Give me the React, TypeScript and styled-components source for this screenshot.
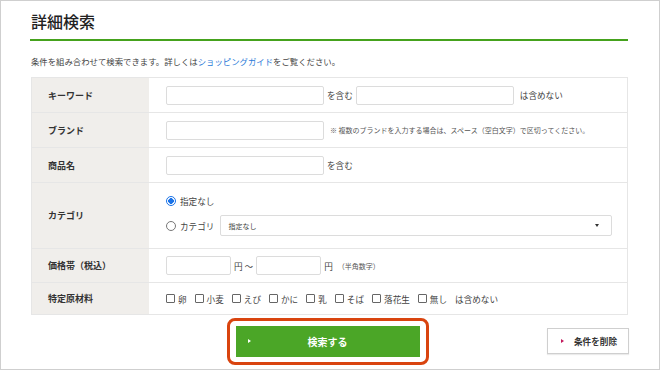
import styled, { createGlobalStyle } from "styled-components";

const GlobalStyle = createGlobalStyle`
  html, body {
    margin: 0;
    padding: 0;
    background: #fff;
  }
  body {
    font-family: "Noto Sans CJK JP", "Noto Sans", sans-serif;
    color: #333;
  }
`;

const Frame = styled.div`
  box-sizing: border-box;
  width: 660px;
  height: 370px;
  border: 1px solid #cfcfcf;
  padding: 0 31px 0 29px;
  overflow: hidden;
`;

const Title = styled.h1`
  margin: 0;
  padding: 9px 0 0 1px;
  height: 29px;
  font-size: 16px;
  font-weight: 500;
  line-height: 22px;
  color: #222;
  border-bottom: 2px solid #45a21d;
`;

const Lead = styled.p`
  margin: 0;
  padding: 14px 0 0 1px;
  height: 12px;
  font-size: 8.4px;
  line-height: 12px;
  color: #444;
`;

const Link = styled.a`
  color: #2a7ad8;
  text-decoration: none;
`;

const Table = styled.div`
  margin-top: 10px;
  margin-left: 1px;
  border: 1px solid #e6e6e6;
  display: flex;
  flex-direction: column;
`;

const Row = styled.div<{ $h: number; $last?: boolean }>`
  display: grid;
  grid-template-columns: 117px 1fr;
  height: ${(p) => p.$h}px;
  border-bottom: ${(p) => (p.$last ? "none" : "1px solid #e6e6e6")};
  box-sizing: border-box;
`;

const Label = styled.div`
  background: #f0eeeb;
  display: flex;
  align-items: center;
  padding-left: 16px;
  font-size: 9px;
  font-weight: 700;
  color: #333;
`;

const Cell = styled.div`
  display: flex;
  align-items: center;
  gap: 3px;
  padding-left: 17px;
  font-size: 8.6px;
  color: #444;
`;

const StackCell = styled(Cell)`
  flex-direction: column;
  align-items: flex-start;
  justify-content: center;
  gap: 8px;
`;

const Line = styled.div`
  display: flex;
  align-items: center;
  gap: 3px;
`;

const Input = styled.div<{ $w: number }>`
  box-sizing: border-box;
  width: ${(p) => p.$w}px;
  height: 19px;
  border: 1px solid #dcdcdc;
  border-radius: 2px;
  background: #fff;
`;

const Note = styled.span<{ $ml?: number }>`
  font-size: 7px;
  color: #555;
  margin-left: ${(p) => p.$ml ?? 0}px;
`;

const Radio = styled.span<{ $on?: boolean }>`
  box-sizing: border-box;
  width: 10px;
  height: 10px;
  border-radius: 50%;
  border: 1px solid ${(p) => (p.$on ? "#1a73e8" : "#777")};
  background: ${(p) =>
    p.$on ? "radial-gradient(circle, #1a73e8 0 2.6px, #fff 3px)" : "#fff"};
  margin-right: 1px;
`;

const Select = styled.div`
  box-sizing: border-box;
  width: 392px;
  height: 21px;
  margin-left: 3px;
  border: 1px solid #dcdcdc;
  border-radius: 2px;
  display: flex;
  align-items: center;
  justify-content: space-between;
  padding: 0 12px 0 7px;
  font-size: 7px;
  color: #444;
`;

const Caret = styled.span`
  width: 0;
  height: 0;
  border-left: 2px solid transparent;
  border-right: 2px solid transparent;
  border-top: 3px solid #333;
`;

const Checks = styled.div`
  display: flex;
  align-items: center;
  gap: 8px;
`;

const Check = styled.label`
  display: flex;
  align-items: center;
  gap: 3px;
`;

const Box = styled.span`
  box-sizing: border-box;
  width: 9px;
  height: 9px;
  border: 1px solid #666;
  border-radius: 1px;
  background: #fff;
`;

const Actions = styled.div`
  display: grid;
  grid-template-columns: 1fr auto 1fr;
  align-items: center;
  margin-top: 3px;
`;

const Highlight = styled.div`
  grid-column: 2;
  box-sizing: border-box;
  width: 202px;
  height: 47px;
  margin-left: -3px;
  border: 3px solid #d9440f;
  border-radius: 8px;
  padding: 5px 6px;
`;

const SearchButton = styled.button`
  position: relative;
  width: 100%;
  height: 31px;
  border: none;
  background: #4ba627;
  color: #fff;
  font-family: inherit;
  font-size: 10px;
  font-weight: 700;
  cursor: pointer;
`;

const Arrow = styled.span<{ $color: string }>`
  width: 0;
  height: 0;
  border-top: 2.5px solid transparent;
  border-bottom: 2.5px solid transparent;
  border-left: 3px solid ${(p) => p.$color};
`;

const SearchArrow = styled(Arrow)`
  position: absolute;
  left: 12px;
  top: 13px;
`;

const ClearButton = styled.button`
  grid-column: 3;
  justify-self: end;
  box-sizing: border-box;
  width: 82px;
  height: 26px;
  margin-right: -1px;
  margin-top: -1px;
  border: 1px solid #cfcfcf;
  background: #fff;
  box-shadow: 0 1px 1px rgba(0, 0, 0, 0.08);
  display: flex;
  align-items: center;
  gap: 10px;
  padding-left: 13px;
  font-family: inherit;
  font-size: 8.6px;
  font-weight: 700;
  color: #333;
  cursor: pointer;
`;

const allergens = ["卵", "小麦", "えび", "かに", "乳", "そば", "落花生", "無し"];

export default function App() {
  return (
    <>
      <GlobalStyle />
      <Frame>
        <Title>詳細検索</Title>
        <Lead>
          条件を組み合わせて検索できます。詳しくは
          <Link href="#">ショッピングガイド</Link>をご覧ください。
        </Lead>
        <Table>
          <Row $h={35}>
            <Label>キーワード</Label>
            <Cell>
              <Input $w={158} />
              <span>を含む</span>
              <Input $w={158} />
              <span style={{ marginLeft: 3 }}>は含めない</span>
            </Cell>
          </Row>
          <Row $h={35}>
            <Label>ブランド</Label>
            <Cell>
              <Input $w={158} />
              <Note $ml={3}>※ 複数のブランドを入力する場合は、スペース（空白文字）で区切ってください。</Note>
            </Cell>
          </Row>
          <Row $h={35}>
            <Label>商品名</Label>
            <Cell>
              <Input $w={158} />
              <span>を含む</span>
            </Cell>
          </Row>
          <Row $h={66}>
            <Label>カテゴリ</Label>
            <StackCell>
              <Line>
                <Radio $on />
                <span>指定なし</span>
              </Line>
              <Line>
                <Radio />
                <span>カテゴリ</span>
                <Select>
                  <span>指定なし</span>
                  <Caret />
                </Select>
              </Line>
            </StackCell>
          </Row>
          <Row $h={34}>
            <Label>価格帯（税込）</Label>
            <Cell>
              <Input $w={65} />
              <span>円 〜</span>
              <Input $w={65} />
              <span>円</span>
              <Note $ml={2}>（半角数字）</Note>
            </Cell>
          </Row>
          <Row $h={31} $last>
            <Label>特定原材料</Label>
            <Cell>
              <Checks>
                {allergens.map((a) => (
                  <Check key={a}>
                    <Box />
                    <span>{a}</span>
                  </Check>
                ))}
                <span>は含めない</span>
              </Checks>
            </Cell>
          </Row>
        </Table>
        <Actions>
          <Highlight>
            <SearchButton>
              <SearchArrow $color="#fff" />
              検索する
            </SearchButton>
          </Highlight>
          <ClearButton>
            <Arrow $color="#c2185b" />
            条件を削除
          </ClearButton>
        </Actions>
      </Frame>
    </>
  );
}
